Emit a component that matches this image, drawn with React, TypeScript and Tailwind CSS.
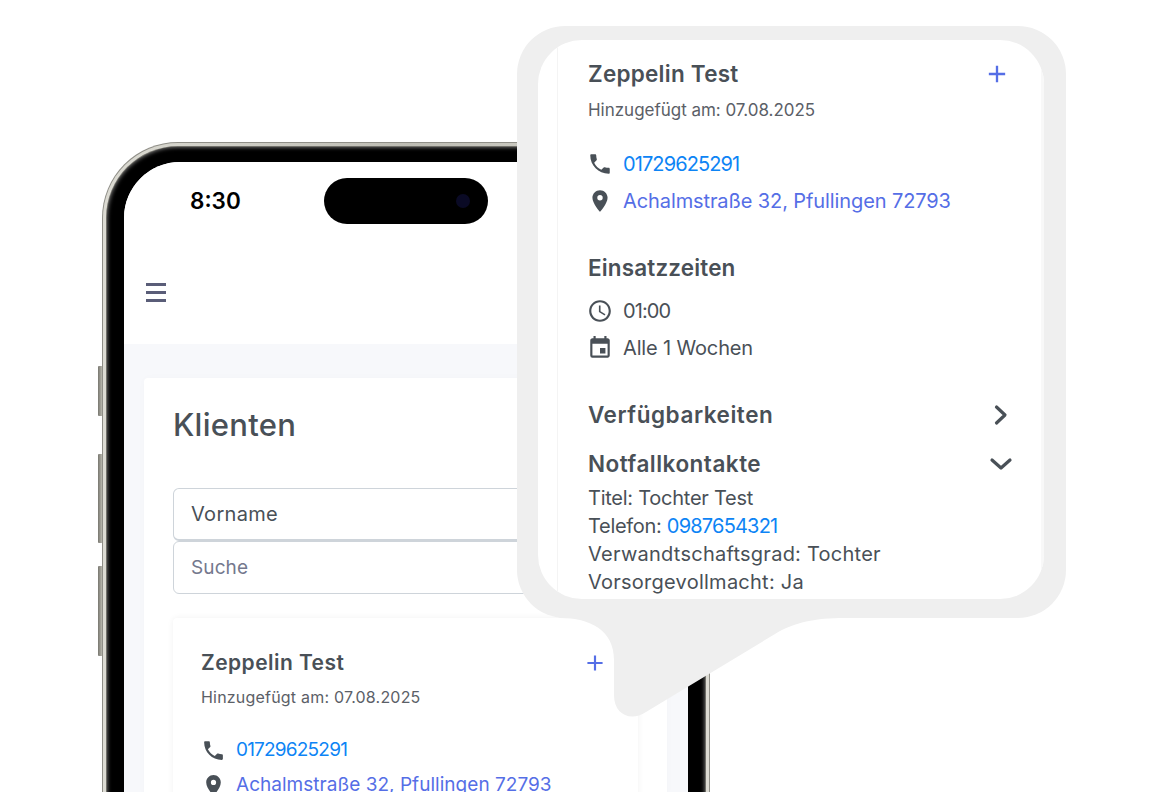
import { MdPhone, MdLocationOn, MdAccessTime, MdEvent, MdAdd } from "react-icons/md";

const font = { fontFamily: "Inter, 'Noto Sans', sans-serif" };

function Side({ cls }: { cls: string }) {
  return <div className={"w-[4px] rounded-l-[1px] bg-gradient-to-r from-[#77766f] to-[#b9b8ae] " + cls} />;
}

export default function App() {
  return (
    <div className="relative h-[792px] w-[1164px] overflow-hidden bg-white" style={font}>
      {/* phone */}
      <div className="flex pl-[98px] pt-[142px]">
        <div className="flex flex-col pt-[224px]">
          <Side cls="h-[50px]" />
          <Side cls="mt-[38px] h-[89px]" />
          <Side cls="mt-[23px] h-[90px]" />
        </div>
        <div className="h-[760px] w-[608px] shrink-0 rounded-t-[76px] bg-[#8f8e87] p-[1px]">
          <div className="h-full rounded-t-[75px] bg-gradient-to-r from-[#dcdbd3] via-[#bdbcb3] to-[#dcdbd3] p-[3px]">
            <div className="h-full rounded-t-[72px] bg-[#6f6e68] p-[1px]">
              <div className="h-full rounded-t-[71px] bg-black px-[17px] pt-[15px] shadow-[inset_0_0_4px_#8a8a8a]">
                <div className="h-full overflow-hidden rounded-t-[56px] bg-[#f7f8fb]">
                  <div className="h-[182px] bg-white">
                    <div className="flex h-[62px] items-end pl-[66px]">
                      <div className="flex h-[46px] items-center">
                        <span className="w-[134px] text-[22.5px] font-semibold text-black">8:30</span>
                        <div className="flex h-[46px] w-[164px] items-center justify-end rounded-full bg-black pr-[18px]">
                          <div className="h-[14px] w-[14px] rounded-full bg-[#0a0a25]" />
                        </div>
                      </div>
                    </div>
                    <div className="pl-[22px] pt-[59px]">
                      <div className="flex w-[20px] flex-col gap-[5px]">
                        <div className="h-[3px] bg-[#5a5d78]" />
                        <div className="h-[3px] bg-[#5a5d78]" />
                        <div className="h-[3px] bg-[#5a5d78]" />
                      </div>
                    </div>
                  </div>
                  <div className="ml-[20px] mt-[34px] w-[523px] rounded-t-[4px] bg-white px-[29px] shadow-[0_0_8px_rgba(0,0,0,0.02)]">
                    <div className="flex h-[110px] items-center pb-[18px] text-[31px] font-medium leading-none tracking-[0.3px] text-[#495057]">Klienten</div>
                    <div className="flex h-[53px] items-center rounded-[6px] border-[1.5px] border-b-[2.5px] border-[#ced4da] pl-[17px] text-[20px] tracking-[0.3px] text-[#495057]">Vorname</div>
                    <div className="flex h-[53px] items-center rounded-[6px] border-[1.5px] border-[#ced4da] pl-[17px] pt-[1px] text-[19px] tracking-[0.1px] text-[#74788d]">Suche</div>
                    <div className="mt-[24px] rounded-t-[4px] bg-white px-[28px] pt-[28px] shadow-[0_0_6px_rgba(0,0,0,0.06)]">
                      <div className="flex h-[34px] items-center justify-between">
                        <span className="text-[21px] font-semibold tracking-[0.45px] text-[#495057]">Zeppelin Test</span>
                        <MdAdd className="mr-[2px] text-[#556ee6]" size={26} />
                      </div>
                      <div className="mt-[5px] text-[16px] leading-[24px] tracking-[0.2px] text-[#5b6067]">Hinzugefügt am: 07.08.2025</div>
                      <div className="mt-[29px] flex h-[24px] items-center gap-[10px]">
                        <MdPhone className="text-[#495057]" size={25} />
                        <span className="text-[19px] tracking-[-0.8px] text-[#0d84f5]">01729625291</span>
                      </div>
                      <div className="mt-[11px] flex h-[24px] items-center gap-[10px]">
                        <MdLocationOn className="text-[#495057]" size={25} />
                        <span className="whitespace-nowrap text-[19px] tracking-[0.03px] text-[#556ee6]">Achalmstraße 32, Pfullingen 72793</span>
                      </div>
                    </div>
                  </div>
                </div>
              </div>
            </div>
          </div>
        </div>
      </div>

      {/* callout */}
      <svg className="absolute left-[540px] top-[600px]" width="310" height="125" viewBox="540 600 310 125">
        <path d="M540 610 L560 618 C590 618 614 630 614 660 L614 695 C614 715 631 722 646 712 L775 634 C795 622 815 618 845 618 L845 600 L540 600 Z" fill="#efefef" />
      </svg>
      <div className="absolute left-[517px] top-[26px] h-[592px] w-[549px] rounded-[48px] bg-[#efefef] pb-[19px] pl-[21px] pr-[22px] pt-[14px]">
        <div className="h-full overflow-hidden rounded-[44px] bg-white pl-[19px]">
          <div className="h-full border-l border-r-[3px] border-l-[#f4f4f4] border-r-[#f8f8f8] pl-[30px] pr-[32px] text-[#495057]">
            <div className="flex h-[58px] items-center justify-between pt-[10px]">
              <span className="text-[22.5px] font-semibold tracking-[0.25px]">Zeppelin Test</span>
              <MdAdd className="mr-[-2px] text-[#556ee6]" size={28} />
            </div>
            <div className="h-[24px] text-[17px] leading-[24px] tracking-[-0.02px] text-[#5b6067]">Hinzugefügt am: 07.08.2025</div>
            <div className="mt-[29px] flex h-[26px] items-center gap-[10px]">
              <MdPhone className="ml-[-1px]" size={26} />
              <span className="text-[20px] tracking-[-0.9px] text-[#0d84f5]">01729625291</span>
            </div>
            <div className="mt-[11px] flex h-[26px] items-center gap-[10px]">
              <MdLocationOn className="ml-[-1px]" size={26} />
              <span className="text-[20px] tracking-[-0.1px] text-[#556ee6]">Achalmstraße 32, Pfullingen 72793</span>
            </div>
            <div className="mt-[39px] flex h-[30px] items-center text-[22.5px] font-semibold tracking-[0.15px]">Einsatzzeiten</div>
            <div className="mt-[15px] flex h-[26px] items-center gap-[10px] text-[20px] tracking-[-0.9px]">
              <MdAccessTime className="ml-[-1px]" size={26} />
              <span>01:00</span>
            </div>
            <div className="mt-[11px] flex h-[26px] items-center gap-[10px] text-[20px] tracking-[-0.15px]">
              <MdEvent className="ml-[-1px]" size={26} />
              <span>Alle 1 Wochen</span>
            </div>
            <div className="mt-[39px] flex h-[30px] items-center justify-between text-[22.5px] font-semibold tracking-[0.55px]">
              <span>Verfügbarkeiten</span>
              <svg className="mr-[-1px]" width="18" height="22" viewBox="0 0 18 22" fill="none" stroke="#495057" strokeWidth="3.2" strokeLinecap="round" strokeLinejoin="round">
                <path d="M4.5 3 L13 11 L4.5 19" />
              </svg>
            </div>
            <div className="mt-[19px] flex h-[30px] items-center justify-between text-[22.5px] font-semibold tracking-[0.5px]">
              <span>Notfallkontakte</span>
              <svg className="mr-[-4px]" width="24" height="16" viewBox="0 0 24 16" fill="none" stroke="#495057" strokeWidth="3.2" strokeLinecap="round" strokeLinejoin="round">
                <path d="M3 4 L12 12 L21 4" />
              </svg>
            </div>
            <div className="mt-[5px] text-[20px] leading-[28px] tracking-[0.25px]">
              <div className="tracking-[-0.25px]">Titel: Tochter Test</div>
              <div className="tracking-[-0.3px]">Telefon: <span className="tracking-[-0.8px] text-[#0d84f5]">0987654321</span></div>
              <div>Verwandtschaftsgrad: Tochter</div>
              <div>Vorsorgevollmacht: Ja</div>
            </div>
          </div>
        </div>
      </div>
    </div>
  );
}
